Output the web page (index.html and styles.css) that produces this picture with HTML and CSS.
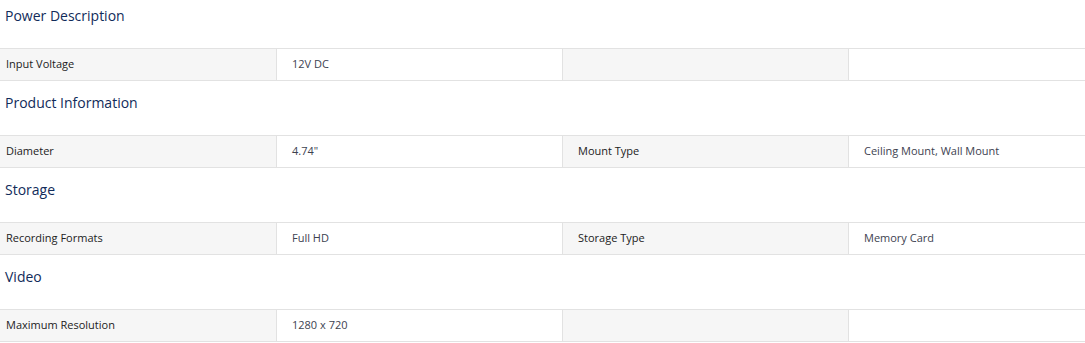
FILE: index.html
```html
<!DOCTYPE html>
<html>
<head>
    <title>Specifications</title>
    <link rel="stylesheet" href="styles.css">
</head>
<body>
<div class="specs">
    <div class="spec-group">
        <h3>Power Description</h3>
        <div class="spec-row">
            <div class="cell label">Input Voltage</div>
            <div class="cell value">12V DC</div>
            <div class="cell label"></div>
            <div class="cell value"></div>
        </div>
    </div>
    <div class="spec-group">
        <h3>Product Information</h3>
        <div class="spec-row">
            <div class="cell label">Diameter</div>
            <div class="cell value">4.74"</div>
            <div class="cell label">Mount Type</div>
            <div class="cell value">Ceiling Mount, Wall Mount</div>
        </div>
    </div>
    <div class="spec-group">
        <h3>Storage</h3>
        <div class="spec-row">
            <div class="cell label">Recording Formats</div>
            <div class="cell value">Full HD</div>
            <div class="cell label">Storage Type</div>
            <div class="cell value">Memory Card</div>
        </div>
    </div>
    <div class="spec-group">
        <h3>Video</h3>
        <div class="spec-row">
            <div class="cell label">Maximum Resolution</div>
            <div class="cell value">1280 x 720</div>
            <div class="cell label"></div>
            <div class="cell value"></div>
        </div>
    </div>
</div>
</body>
</html>
```

FILE: styles.css
```css
body {
    margin: 0;
    font-family: "Open Sans", Arial, sans-serif;
    background: white;
}
.specs {
    margin-top: -6px;
}
.spec-group h3 {
    margin: 0;
    height: 54px;
    padding: 12px 0 0 5px;
    box-sizing: border-box;
    font-size: 14px;
    font-weight: 500;
    color: #112b5a;
}
.spec-row {
    display: grid;
    grid-template-columns: 276px 286px 286px 1fr;
    border-top: 1px solid #e2e2e2;
    border-bottom: 1px solid #e2e2e2;
}
.cell {
    height: 31px;
    line-height: 29px;
    font-size: 11px;
    padding-left: 15px;
    border-left: 1px solid #e2e2e2;
    color: #333;
    white-space: nowrap;
}
.cell:first-child {
    border-left: none;
    padding-left: 6px;
}
.label {
    background-color: #f6f6f6;
    font-weight: 500;
    color: #222;
}
.value {
    background-color: white;
    color: #3d4250;
}
```
